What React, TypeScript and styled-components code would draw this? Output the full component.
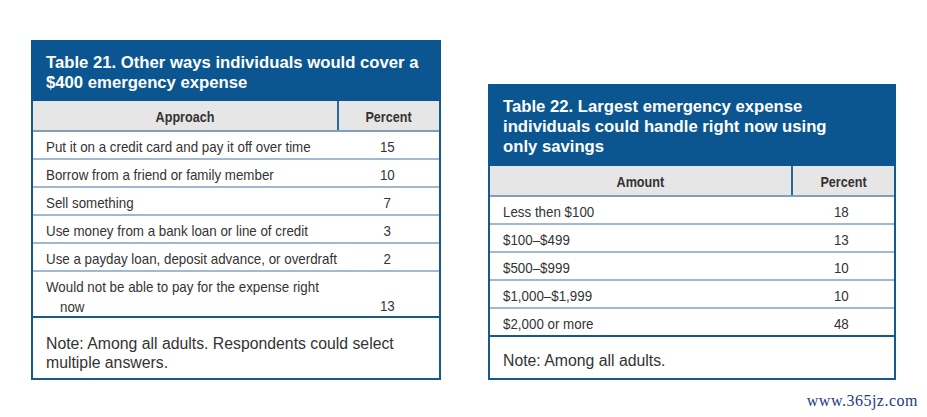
import React from 'react';
import styled, { createGlobalStyle } from 'styled-components';

const GlobalStyle = createGlobalStyle`
  body {
    margin: 0;
    background: #ffffff;
    font-family: "Liberation Sans", Arial, sans-serif;
  }
`;

type Row = { label: string; value: string; wrap?: string };

const table21: Row[] = [
  { label: 'Put it on a credit card and pay it off over time', value: '15' },
  { label: 'Borrow from a friend or family member', value: '10' },
  { label: 'Sell something', value: '7' },
  { label: 'Use money from a bank loan or line of credit', value: '3' },
  { label: 'Use a payday loan, deposit advance, or overdraft', value: '2' },
  { label: 'Would not be able to pay for the expense right', wrap: 'now', value: '13' },
];

const table22: Row[] = [
  { label: 'Less then $100', value: '18' },
  { label: '$100–$499', value: '13' },
  { label: '$500–$999', value: '10' },
  { label: '$1,000–$1,999', value: '10' },
  { label: '$2,000 or more', value: '48' },
];

const App = (): JSX.Element => {
  return (
    <Page>
      <GlobalStyle />
      <Card $width={410}>
        <Title $bottom={8}>
          Table 21. Other ways individuals would cover a
          <br />
          $400 emergency expense
        </Title>
        <Body>
          <HeadRow $col={102}>
            <HeadCell>
              <Narrow $center>Approach</Narrow>
            </HeadCell>
            <HeadCell $divider>
              <Narrow $center>Percent</Narrow>
            </HeadCell>
          </HeadRow>
          {table21.map((r) => (
            <DataRow key={r.label} $col={102} $tall={!!r.wrap}>
              <LabelCell>
                <Narrow>{r.label}</Narrow>
                {r.wrap && <Hang>{r.wrap}</Hang>}
              </LabelCell>
              <ValueCell>
                <Narrow $center>{r.value}</Narrow>
              </ValueCell>
            </DataRow>
          ))}
          <Note $height={60} $top={16}>
            Note: Among all adults. Respondents could select
            <br />
            multiple answers.
          </Note>
        </Body>
      </Card>

      <Card $width={408}>
        <Title $bottom={9}>
          Table 22. Largest emergency expense
          <br />
          individuals could handle right now using
          <br />
          only savings
        </Title>
        <Body>
          <HeadRow $col={103}>
            <HeadCell>
              <Narrow $center>Amount</Narrow>
            </HeadCell>
            <HeadCell $divider>
              <Narrow $center>Percent</Narrow>
            </HeadCell>
          </HeadRow>
          {table22.map((r) => (
            <DataRow key={r.label} $col={103}>
              <LabelCell>
                <Narrow>{r.label}</Narrow>
              </LabelCell>
              <ValueCell>
                <Narrow $center>{r.value}</Narrow>
              </ValueCell>
            </DataRow>
          ))}
          <Note $height={41} $top={14}>
            Note: Among all adults.
          </Note>
        </Body>
      </Card>

      <Watermark>www.365jz.com</Watermark>
    </Page>
  );
};

export default App;

const Page = styled.div`
  position: relative;
  width: 927px;
  height: 417px;
  box-sizing: border-box;
  padding: 40px 0 37px 31px;
  display: flex;
  align-items: flex-end;
  gap: 47px;
`;

const Card = styled.div<{ $width: number }>`
  width: ${(p) => p.$width}px;
  display: flex;
  flex-direction: column;
`;

const Title = styled.div<{ $bottom: number }>`
  background: #0b5690;
  color: #ffffff;
  font-family: "Liberation Sans", Arial, sans-serif;
  font-weight: bold;
  font-size: 16.7px;
  line-height: 20px;
  padding: 13px 10px ${(p) => p.$bottom}px 15px;
  white-space: nowrap;
`;

const Body = styled.div`
  border: 2px solid #165a8c;
  border-top: none;
`;

// condensed face of the print original, approximated by narrowing Liberation Sans
const Narrow = styled.span<{ $center?: boolean }>`
  display: inline-block;
  white-space: nowrap;
  transform: scaleX(0.89);
  transform-origin: ${(p) => (p.$center ? 'center' : 'left')} center;
`;

const HeadRow = styled.div<{ $col: number }>`
  display: grid;
  grid-template-columns: minmax(0, 1fr) ${(p) => p.$col}px;
  height: 31px;
  background: #e6e6e6;
  border-bottom: 2px solid #7f9fbb;
  box-sizing: border-box;
`;

const HeadCell = styled.div<{ $divider?: boolean }>`
  display: flex;
  align-items: center;
  justify-content: center;
  font-family: "Liberation Sans", Arial, sans-serif;
  font-weight: bold;
  font-size: 15px;
  color: #333333;
  padding-top: 1px;
  ${(p) => (p.$divider ? 'border-left: 2px solid #2c6996;' : '')}
  span {
    transform: scaleX(0.84);
  }
`;

const DataRow = styled.div<{ $col: number; $tall?: boolean }>`
  display: grid;
  grid-template-columns: minmax(0, 1fr) ${(p) => p.$col}px;
  height: ${(p) => (p.$tall ? 46 : 28)}px;
  box-sizing: border-box;
  border-bottom: 2px solid #9fbad0;
  &:nth-last-child(2) {
    border-bottom: 2px solid #165a8c;
  }
`;

const LabelCell = styled.div`
  font-family: "Liberation Sans", Arial, sans-serif;
  font-size: 15px;
  line-height: 20px;
  color: #333333;
  padding: 5px 0 0 13px;
  display: flex;
  flex-direction: column;
  align-items: flex-start;
  min-width: 0;
`;

const Hang = styled(Narrow)`
  margin-left: 14px;
`;

const ValueCell = styled.div`
  font-family: "Liberation Sans", Arial, sans-serif;
  font-size: 15px;
  line-height: 20px;
  color: #333333;
  display: flex;
  align-items: flex-end;
  justify-content: center;
  padding-bottom: 1px;
  padding-right: 2px;
`;

const Note = styled.div<{ $height: number; $top: number }>`
  height: ${(p) => p.$height}px;
  box-sizing: border-box;
  padding: ${(p) => p.$top}px 0 0 13px;
  font-family: "Liberation Sans", Arial, sans-serif;
  font-size: 15.8px;
  line-height: 19px;
  color: #333333;
  white-space: nowrap;
`;

const Watermark = styled.div`
  position: absolute;
  right: 9px;
  bottom: 7px;
  font-family: "Liberation Serif", serif;
  font-size: 16px;
  color: #1c3a80;
  letter-spacing: 0.5px;
`;
